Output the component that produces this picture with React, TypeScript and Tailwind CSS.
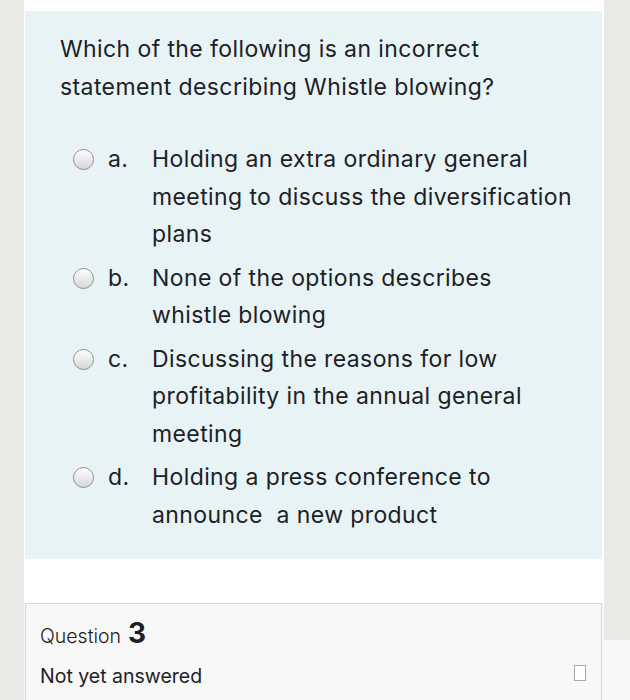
import React from "react";

const options = [
  { letter: "a.", lines: ["Holding an extra ordinary general", "meeting to discuss the diversification", "plans"] },
  { letter: "b.", lines: ["None of the options describes", "whistle blowing"] },
  { letter: "c.", lines: ["Discussing the reasons for low", "profitability in the annual general", "meeting"] },
  { letter: "d.", lines: ["Holding a press conference to", "announce\u00a0 a new product"] },
];

function Radio() {
  return (
    <span className="mt-[8px] block h-[21px] w-[21px] shrink-0 rounded-full border border-[#8e8e8e] bg-gradient-to-b from-[#ffffff] to-[#d6d6d6] shadow-[inset_0_1px_1px_rgba(255,255,255,0.9)]" />
  );
}

export default function App() {
  return (
    <div
      className="flex h-[700px] w-[630px] overflow-hidden bg-[#f8f8f8] text-[#1d2125]"
      style={{ fontFamily: "Inter, 'Noto Sans', sans-serif" }}
    >
      <div className="h-full w-[24px] shrink-0 bg-[#ebe9e6]" />
      <div className="flex w-[580px] shrink-0 flex-col">
        <div className="bg-white pt-[11px]">
          <div className="ml-[1px] mr-[2px] bg-[#e7f3f5] pb-[25px] pl-[35px] pr-[10px] pt-[19px]">
            <p className="whitespace-nowrap text-[23px] leading-[38px] tracking-[0.4px]">
              Which of the following is an incorrect
              <br />
              statement describing Whistle blowing?
            </p>
            <div className="mt-[35px] flex flex-col gap-[6px] pl-[13px]">
              {options.map((o) => (
                <div key={o.letter} className="flex items-start">
                  <Radio />
                  <span className="ml-[14px] w-[44px] shrink-0 text-[23px] leading-[37.5px] tracking-[0.4px]">{o.letter}</span>
                  <span className="flex flex-col whitespace-nowrap text-[23px] leading-[37.5px] tracking-[0.4px]">
                    {o.lines.map((l) => (
                      <span key={l}>{l}</span>
                    ))}
                  </span>
                </div>
              ))}
            </div>
          </div>
          <div className="h-[44px]" />
        </div>
        <div className="ml-[1px] mr-[2px] flex-1 border-x border-t border-[#d6d6d6] bg-[#f8f8f8] pl-[14px] pr-[15px] pt-[16px]">
          <div className="flex items-baseline gap-[7px] text-[#1d2125]">
            <span className="text-[19.5px] font-light leading-[26px]">Question</span>
            <span className="text-[28px] font-bold leading-[26px]">3</span>
          </div>
          <div className="mt-[12px] flex items-start justify-between">
            <span className="text-[19.5px] leading-[30px]">Not yet answered</span>
            <span className="mt-[4px] block h-[16px] w-[12px] border border-[#a8a8a8] bg-white" />
          </div>
        </div>
      </div>
      <div className="flex w-[26px] shrink-0 flex-col">
        <div className="h-[640px] bg-[#ebe9e6]" />
        <div className="flex-1 bg-[#f8f8f8]" />
      </div>
    </div>
  );
}
